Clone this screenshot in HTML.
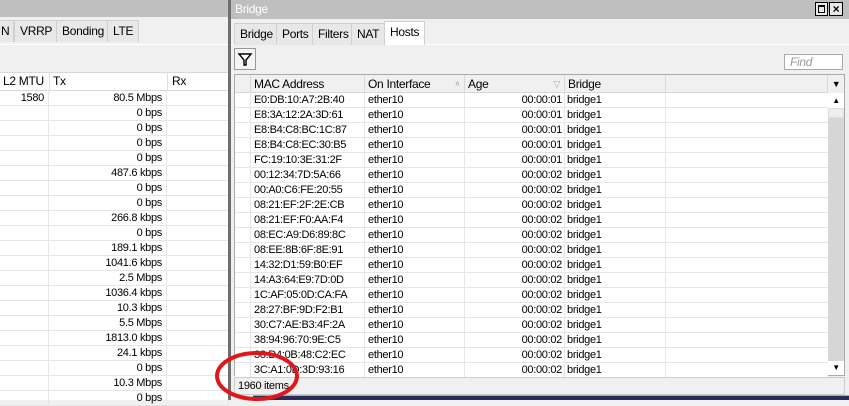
<!DOCTYPE html>
<html><head><style>
*{margin:0;padding:0;box-sizing:border-box}
body{width:849px;height:400px;overflow:hidden;background:#f0f0f0;font-family:"Liberation Sans",sans-serif;font-size:11px;color:#000;position:relative;letter-spacing:-0.3px}
.a{position:absolute}
.tab{position:absolute;height:22px;line-height:20px;border:1px solid #d0d0d0;border-bottom:none;background:#e8e8e8;padding:0 5px;font-size:12px}
.row{position:absolute;height:15px;line-height:15px;border-bottom:1px solid #e6e6e6;background:#fff}
.c{position:absolute;top:0;height:15px;border-right:1px solid #e6e6e6;overflow:hidden;white-space:nowrap}
.hd{position:absolute;height:18px;line-height:18px;background:#f0f0f0;border-right:1px solid #d8d8d8;border-bottom:1px solid #d8d8d8;padding-left:3px;font-size:12px}
</style></head><body>
<!-- left window -->
<div class="a" style="left:0;top:0;width:229px;height:17px;background:#bfbfbf"></div>
<div class="a" style="left:0;top:17px;width:229px;height:28px;background:#f0f0f0;border-bottom:1px solid #fff"></div>
<div class="tab" style="left:-3px;top:20px;width:17px;padding:0 2px 0 3px">N</div>
<div class="tab" style="left:14px;top:20px">VRRP</div>
<div class="tab" style="left:56px;top:20px">Bonding</div>
<div class="tab" style="left:107px;top:20px">LTE</div>
<div class="a" style="left:0;top:72px;width:229px;height:19px;background:#fff;border-top:1px solid #d8d8d8;border-bottom:1px solid #d8d8d8"></div>
<div class="a" style="left:3px;top:73px;line-height:17px;font-size:12px">L2 MTU</div>
<div class="a" style="left:49px;top:72px;width:1px;height:328px;background:#e0e0e0"></div>
<div class="a" style="left:53px;top:73px;line-height:17px;font-size:12px">Tx</div>
<div class="a" style="left:167px;top:72px;width:1px;height:328px;background:#e0e0e0"></div>
<div class="a" style="left:172px;top:73px;line-height:17px;font-size:12px">Rx</div>
<div class="a" style="left:0;top:91px;width:229px;height:309px;background:#fff"></div>
<div id="L"></div>
<!-- bridge window -->
<div class="a" style="left:228px;top:0;width:3px;height:400px;background:#6e6e6e"></div>
<div class="a" style="left:231px;top:0;width:618px;height:19px;background:#bfbfbf"></div>
<div class="a" style="left:235px;top:2px;color:#fff;font-size:12px">Bridge</div>
<div class="a" style="left:815px;top:2px;width:13px;height:14px;border:1px solid #000;background:#e8e8e8"><div style="margin:2px;width:7px;height:8px;border:1px solid #000;border-top-width:2px"></div></div>
<div class="a" style="left:829px;top:2px;width:14px;height:14px;border:1px solid #000;background:#e8e8e8;font-size:12px;line-height:12px;text-align:center;font-weight:bold">×</div>
<div class="a" style="left:231px;top:44px;width:618px;height:1px;background:#fff"></div>
<div class="tab" style="left:234px;top:23px">Bridge</div>
<div class="tab" style="left:276px;top:23px">Ports</div>
<div class="tab" style="left:312px;top:23px">Filters</div>
<div class="tab" style="left:351px;top:23px">NAT</div>
<div class="tab" style="left:384px;top:21px;height:24px;background:#fff">Hosts</div>
<div class="a" style="left:234px;top:48px;width:22px;height:22px;border:1px solid #999;background:#f4f4f4">
<svg width="20" height="20" viewBox="0 0 20 20"><path d="M4 5h12l-5 6v5h-2v-5z" fill="#fff" stroke="#000" stroke-width="1.4"/></svg></div>
<div class="a" style="left:784px;top:54px;width:59px;height:16px;border:1px solid #aaa;background:#fff;color:#999;font-style:italic;padding-left:5px;line-height:14px;font-size:12px">Find</div>
<div class="a" style="left:234px;top:74px;width:611px;height:302px;background:#fff;border:1px solid #aaa"></div>
<div class="hd" style="left:235px;top:75px;width:16px"></div>
<div class="hd" style="left:251px;top:75px;width:114px">MAC Address</div>
<div class="hd" style="left:365px;top:75px;width:100px">On Interface<span style="position:absolute;right:4px;color:#aaa;font-size:8px">∧</span></div>
<div class="hd" style="left:465px;top:75px;width:100px">Age<span style="position:absolute;right:4px;color:#aaa;font-size:9px">▽</span></div>
<div class="hd" style="left:565px;top:75px;width:101px">Bridge</div>
<div class="hd" style="left:666px;top:75px;width:162px"></div>
<div class="a" style="left:828px;top:75px;width:16px;height:18px;background:#f0f0f0;font-size:9px;text-align:center;line-height:18px">▼</div>
<div class="a" style="left:828px;top:93px;width:16px;height:282px;background:#d6d6d6"></div>
<div class="a" style="left:828px;top:93px;width:16px;height:15px;background:#fff;font-size:8px;text-align:center;line-height:15px">▲</div>
<div class="a" style="left:828px;top:108px;width:16px;height:10px;background:#eee;border:1px solid #ddd"></div>
<div class="a" style="left:828px;top:361px;width:16px;height:14px;background:#fff;font-size:8px;text-align:center;line-height:14px">▼</div>
<div id="R"></div>
<div class="a" style="left:234px;top:377px;width:611px;height:18px;border:1px solid #ccc;background:#f0f0f0;line-height:16px;padding-left:3px">1960 items</div>
<div class="a" style="left:253px;top:395px;width:596px;height:5px;background:#2b2b5a;border-top:1px solid #aab"></div>
<svg class="a" style="left:205px;top:345px" width="110" height="60"><ellipse cx="52" cy="31" rx="40" ry="23" fill="none" stroke="#e0161a" stroke-width="4"/></svg>
<script>
var tx=["80.5 Mbps","0 bps","0 bps","0 bps","0 bps","487.6 kbps","0 bps","0 bps","266.8 kbps","0 bps","189.1 kbps","1041.6 kbps","2.5 Mbps","1036.4 kbps","10.3 kbps","5.5 Mbps","1813.0 kbps","24.1 kbps","0 bps","10.3 Mbps","0 bps"];
var h="";
for(var i=0;i<tx.length;i++){var y=91+i*15;h+='<div class="row" style="left:0;top:'+y+'px;width:229px;background:transparent"><div class="c" style="left:0;width:49px;text-align:right;padding-right:4px">'+(i==0?"1580":"")+'</div><div class="c" style="left:49px;width:118px;text-align:right;padding-right:4px">'+tx[i]+'</div><div class="c" style="left:167px;width:62px"></div></div>';}
document.getElementById("L").innerHTML=h;
var m=["E0:DB:10:A7:2B:40","E8:3A:12:2A:3D:61","E8:B4:C8:BC:1C:87","E8:B4:C8:EC:30:B5","FC:19:10:3E:31:2F","00:12:34:7D:5A:66","00:A0:C6:FE:20:55","08:21:EF:2F:2E:CB","08:21:EF:F0:AA:F4","08:EC:A9:D6:89:8C","08:EE:8B:6F:8E:91","14:32:D1:59:B0:EF","14:A3:64:E9:7D:0D","1C:AF:05:0D:CA:FA","28:27:BF:9D:F2:B1","30:C7:AE:B3:4F:2A","38:94:96:70:9E:C5","38:D4:0B:48:C2:EC","3C:A1:0D:3D:93:16"];
h="";
for(var i=0;i<m.length;i++){var y=93+i*15;h+='<div class="row" style="left:235px;top:'+y+'px;width:593px"><div class="c" style="left:0;width:16px"></div><div class="c" style="left:16px;width:114px;padding-left:3px">'+m[i]+'</div><div class="c" style="left:130px;width:100px;padding-left:3px">ether10</div><div class="c" style="left:230px;width:100px;text-align:right;padding-right:2px">00:00:0'+(i<5?1:2)+'</div><div class="c" style="left:330px;width:101px;padding-left:2px">bridge1</div></div>';}
document.getElementById("R").innerHTML=h;
</script>
</body></html>
